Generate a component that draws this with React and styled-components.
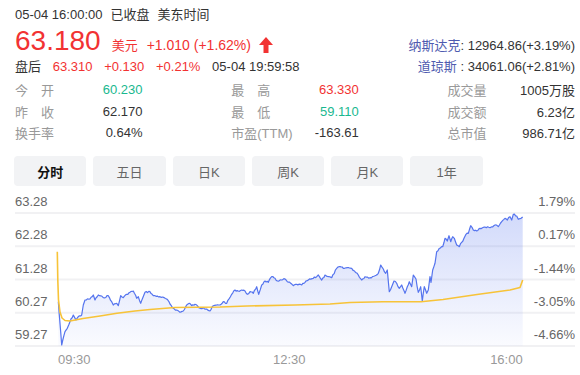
import React from 'react';
import styled, { createGlobalStyle } from 'styled-components';

const RED = '#f23232';
const GREEN = '#19b88f';
const BLUE_LABEL = '#4f5bb0';

const GlobalStyle = createGlobalStyle`
  html, body {
    margin: 0;
    padding: 0;
    background: #fff;
  }
  body {
    font-family: "Liberation Sans", Arial, "Noto Sans CJK SC", sans-serif;
    color: #333;
  }
`;

// traced from the reference, page coordinates
const pricePoints = [
  [58.3, 301.7], [61.7, 345], [65, 331.7], [67.3, 328.3], [70, 321.7], [73.3, 315], [76, 320],
  [78.3, 316.7], [81.7, 315], [83.3, 305], [85, 300], [90, 299], [93.3, 295], [95, 300],
  [98.3, 295], [103.3, 297.7], [108.3, 295.7], [111.7, 301.7], [113.3, 305], [116.7, 303.3],
  [118.3, 305.7], [120.7, 295.7], [123.3, 297.7], [126.7, 294.3], [130, 292.3], [133.3, 291],
  [136.7, 298.3], [138.3, 296.7], [140.7, 303.3], [145, 292.3], [150, 291.7], [153.3, 295.7],
  [160, 296.7], [166.7, 299], [170, 304], [173.3, 308.3], [176.7, 310], [180, 312.3],
  [183.3, 311], [186.7, 305], [189.3, 303.3], [191.7, 305.7], [195, 304.3], [200, 308.3],
  [203.3, 307.7], [206.7, 309], [210, 311], [213.3, 305.7], [220, 305], [223.3, 301.7],
  [226.7, 303.3], [231.7, 294.3], [235, 290], [238.3, 291], [241.7, 290], [245, 291],
  [247.3, 294.3], [250, 291.7], [253.3, 293.3], [256.7, 286.7], [258.7, 294.3], [261.7, 285],
  [265, 281], [268.3, 282.3], [271.7, 276.7], [275, 278.3], [277.3, 281], [281.7, 280],
  [285, 279], [287.3, 281.7], [290.7, 283.3], [293.3, 285.7], [296.7, 284.3], [301.7, 285],
  [305, 282.3], [308.3, 280], [313.3, 278.3], [316.7, 276.7], [318.3, 275], [321.7, 280],
  [325, 275], [328.3, 276.7], [331.7, 277.7], [336.7, 268.3], [340, 266.7], [343.3, 268.3],
  [347.3, 267.7], [351.7, 268.3], [355, 271.7], [358.3, 275], [361.7, 280], [365, 276.7],
  [370, 277.7], [375, 275.7], [378.3, 273.3], [380.7, 265], [383.3, 269], [385.7, 273.3],
  [387.3, 270], [389.3, 291.7], [391.7, 286.7], [394, 281], [396.7, 283.3], [399.3, 288.3],
  [401.7, 285], [405, 293.3], [407.3, 286.7], [409.3, 281.7], [411.7, 286.7], [413.3, 275],
  [416, 279], [418.3, 292.3], [420.7, 286.7], [422.3, 301], [424.3, 286.7], [426.7, 293.3],
  [428.3, 290], [430, 276.7], [431, 282.3], [432.7, 270], [435, 263.3], [436.7, 251.7],
  [439.3, 248.3], [442.7, 246.7], [445, 238.3], [447.3, 241], [449, 235.7], [450.7, 241.7],
  [452.7, 236.7], [454.3, 238.3], [456.7, 245], [459.3, 246.7], [461.7, 242.3], [464, 238.3],
  [466, 234.3], [468.3, 233.3], [470.7, 225.7], [473.3, 230], [476.7, 231], [480, 228.3],
  [485, 227], [490, 227.7], [495, 225], [498.3, 226.7], [501.7, 221.7], [505, 218.3],
  [507.3, 220], [510, 216.7], [511.7, 220], [513.3, 214.3], [516.7, 216], [518.3, 219.3],
  [521, 218.3], [522.7, 217],
];

const avgPoints = [
  [57.3, 251.7], [57.8, 280], [58.5, 300], [60, 312], [62, 318], [65, 320.5], [70, 321],
  [83, 318.5], [100, 316], [117, 313.3], [135, 311], [150, 309.5], [175, 307.5], [220, 307],
  [247, 306], [295, 305], [330, 304], [350, 302.5], [383, 301.7], [421, 301.7], [443, 299.5],
  [477, 294.5], [510, 290], [520, 287.5], [522.7, 280],
];

// adds a little tick noise between traced points
const roughen = (points, amp) => {
  let seed = 7;
  const rand = () => {
    seed = (seed * 9301 + 49297) % 233280;
    return seed / 233280 - 0.5;
  };
  const out = [points[0]];
  for (let i = 1; i < points.length; i++) {
    const [x0, y0] = points[i - 1];
    const [x1, y1] = points[i];
    const steps = Math.max(1, Math.round((x1 - x0) / 1.3));
    for (let s = 1; s <= steps; s++) {
      const t = s / steps;
      const jitter = s === steps ? 0 : rand() * amp;
      out.push([x0 + (x1 - x0) * t, y0 + (y1 - y0) * t + jitter]);
    }
  }
  return out;
};

const toPath = points =>
  points.map(([x, y], i) => `${i ? 'L' : 'M'}${x.toFixed(1)} ${y.toFixed(1)}`).join(' ');

const GRID = [213, 246.25, 279.5, 312.75, 346];
const LEFT_LABELS = ['63.28', '62.28', '61.28', '60.27', '59.27'];
const RIGHT_LABELS = ['1.79%', '0.17%', '-1.44%', '-3.05%', '-4.66%'];

const stats = [
  [{ label: '今 开', value: '60.230', tone: 'down', spread: true }, { label: '最 高', value: '63.330', tone: 'up', spread: true }, { label: '成交量', value: '1005万股' }],
  [{ label: '昨 收', value: '62.170', spread: true }, { label: '最 低', value: '59.110', tone: 'down', spread: true }, { label: '成交额', value: '6.23亿' }],
  [{ label: '换手率', value: '0.64%' }, { label: '市盈(TTM)', value: '-163.61' }, { label: '总市值', value: '986.71亿' }],
];

const tabs = ['分时', '五日', '日K', '周K', '月K', '1年'];

const Page = styled.div`
  width: 580px;
  box-sizing: border-box;
  padding: 5px 5px 0 15px;
`;

const MetaLine = styled.div`
  display: flex;
  gap: 8px;
  font-size: 13px;
  line-height: 20px;
  color: #333;
`;

const Quote = styled.div`
  display: flex;
  justify-content: space-between;
  align-items: flex-end;
`;

const PriceRow = styled.div`
  display: flex;
  align-items: baseline;
  height: 32px;
  color: ${RED};
`;

const Price = styled.span`
  font-size: 28px;
  line-height: 32px;
`;

const Unit = styled.span`
  margin-left: 11px;
  font-size: 13px;
`;

const Change = styled.span`
  margin-left: 9px;
  font-size: 14px;
`;

const UpArrow = styled.svg`
  align-self: flex-end;
  margin: 0 0 4px 8px;
`;

const AfterRow = styled.div`
  display: flex;
  gap: 11.7px;
  font-size: 13px;
  line-height: 20px;
`;

const Num = styled.span`
  color: ${p => (p.$tone === 'up' ? RED : p.$tone === 'down' ? GREEN : '#333')};
`;

const Indices = styled.div`
  display: flex;
  flex-direction: column;
  align-items: flex-end;
  font-size: 13px;
  line-height: 21px;
`;

const IndexName = styled.span`
  color: ${BLUE_LABEL};
`;

const Stats = styled.div`
  display: grid;
  grid-template-columns: repeat(3, 127.5px);
  grid-auto-rows: 21.5px;
  justify-content: space-between;
  margin-top: 2px;
  font-size: 13px;
`;

const StatCell = styled.div`
  display: flex;
  justify-content: space-between;
  align-items: center;
`;

const StatLabel = styled.span`
  display: inline-block;
  color: #999;
  ${p => p.$spread && 'width: 39px; text-align-last: justify;'}
`;

const TabBar = styled.div`
  display: flex;
  gap: 7px;
  margin: 12.5px 0 0 -1px;
`;

const Tab = styled.div`
  width: 72.3px;
  height: 30px;
  display: flex;
  align-items: center;
  justify-content: center;
  border-radius: 4px;
  background: #f2f3f5;
  font-size: 13px;
  color: ${p => (p.$active ? '#111' : '#666')};
  font-weight: ${p => (p.$active ? 700 : 400)};
`;

const ChartSvg = styled.svg`
  display: block;
  margin-top: 4px;
  overflow: visible;
`;

const IntradayChart = () => {
  const line = roughen(pricePoints, 1.6);
  const area = `${toPath(line)} L522.7 346 L58.3 346 Z`;
  return (
    <ChartSvg width="560" height="185" viewBox="15 190 560 185">
      <defs>
        <linearGradient id="fill" x1="0" y1="210" x2="0" y2="346" gradientUnits="userSpaceOnUse">
          <stop offset="0" stopColor="#5a78ee" stopOpacity="0.28" />
          <stop offset="1" stopColor="#5a78ee" stopOpacity="0.03" />
        </linearGradient>
      </defs>
      {GRID.map(y => (
        <line key={y} x1="15" x2="575" y1={y} y2={y} stroke="#f1f1f3" strokeWidth="2" />
      ))}
      {GRID.map((y, i) => (
        <g key={`l${y}`} fontSize="13" fill="#666">
          <text x="15" y={y - 7}>{LEFT_LABELS[i]}</text>
          <text x="575" y={y - 7} textAnchor="end">{RIGHT_LABELS[i]}</text>
        </g>
      ))}
      <path d={area} fill="url(#fill)" />
      <path d={toPath(line)} fill="none" stroke="#5574ee" strokeWidth="1.2" strokeLinejoin="round" />
      <path d={toPath(avgPoints)} fill="none" stroke="#f7c338" strokeWidth="1.6" strokeLinejoin="round" />
      <g fontSize="13" fill="#999">
        <text x="58" y="364">09:30</text>
        <text x="273" y="364">12:30</text>
        <text x="522.7" y="364" textAnchor="end">16:00</text>
      </g>
    </ChartSvg>
  );
};

const App = () => (
  <Page>
    <GlobalStyle />
    <MetaLine>
      <span>05-04 16:00:00</span>
      <span>已收盘</span>
      <span>美东时间</span>
    </MetaLine>
    <Quote>
      <div>
        <PriceRow>
          <Price>63.180</Price>
          <Unit>美元</Unit>
          <Change>+1.010 (+1.62%)</Change>
          <UpArrow width="14" height="16" viewBox="0 0 14 16">
            <path d="M7 0 L14 8 L9.5 8 L9.5 16 L4.5 16 L4.5 8 L0 8 Z" fill={RED} />
          </UpArrow>
        </PriceRow>
        <AfterRow>
          <span>盘后</span>
          <Num $tone="up">63.310</Num>
          <Num $tone="up">+0.130</Num>
          <Num $tone="up">+0.21%</Num>
          <span>05-04 19:59:58</span>
        </AfterRow>
      </div>
      <Indices>
        <div><IndexName>纳斯达克</IndexName>: 12964.86(+3.19%)</div>
        <div><IndexName>道琼斯</IndexName> : 34061.06(+2.81%)</div>
      </Indices>
    </Quote>
    <Stats>
      {stats.flat().map(s => (
        <StatCell key={s.label}>
          <StatLabel $spread={s.spread}>{s.label}</StatLabel>
          <Num $tone={s.tone}>{s.value}</Num>
        </StatCell>
      ))}
    </Stats>
    <TabBar>
      {tabs.map((t, i) => (
        <Tab key={t} $active={i === 0}>{t}</Tab>
      ))}
    </TabBar>
    <IntradayChart />
  </Page>
);

export default App;
